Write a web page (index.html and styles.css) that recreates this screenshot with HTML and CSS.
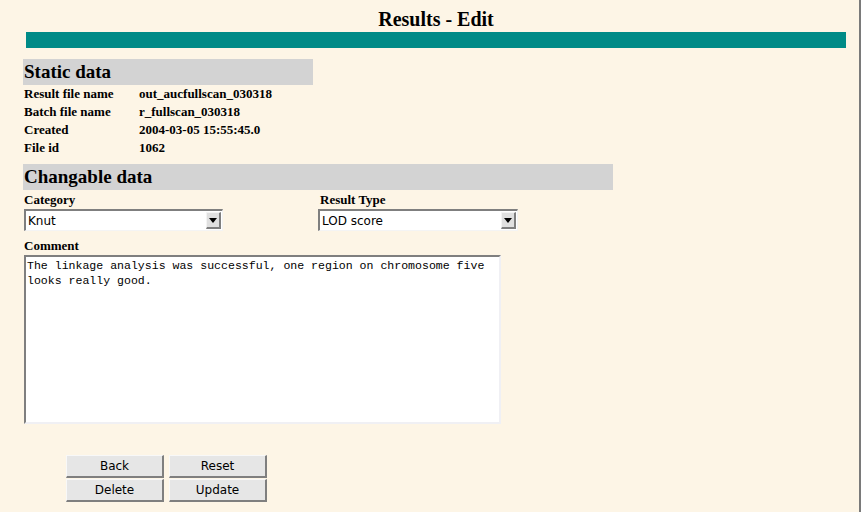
FILE: index.html
```html
<!DOCTYPE html>
<html>
<head>
<meta charset="utf-8">
<title>Results - Edit</title>
<link rel="stylesheet" href="styles.css">
</head>
<body>
<div class="page">
  <div class="top">
    <h1 class="title">Results - Edit</h1>
    <div class="bar"></div>
  </div>

  <section class="static">
    <h2 class="head">Static data</h2>
    <div class="row"><span class="lbl">Result file name</span><span class="val">out_aucfullscan_030318</span></div>
    <div class="row"><span class="lbl">Batch file name</span><span class="val">r_fullscan_030318</span></div>
    <div class="row"><span class="lbl">Created</span><span class="val">2004-03-05 15:55:45.0</span></div>
    <div class="row"><span class="lbl">File id</span><span class="val">1062</span></div>
  </section>

  <section class="change">
    <h2 class="head">Changable data</h2>
    <div class="fields">
      <div class="field">
        <div class="flabel">Category</div>
        <div class="select"><span class="stext">Knut</span><span class="arrow"><svg width="8" height="5" viewBox="0 0 8 5"><polygon points="0,0 8,0 4,5" fill="#000"/></svg></span></div>
      </div>
      <div class="field second">
        <div class="flabel">Result Type</div>
        <div class="select"><span class="stext">LOD score</span><span class="arrow"><svg width="8" height="5" viewBox="0 0 8 5"><polygon points="0,0 8,0 4,5" fill="#000"/></svg></span></div>
      </div>
    </div>
    <div class="flabel">Comment</div>
    <textarea class="comment">The linkage analysis was successful, one region on chromosome five looks really good.</textarea>
  </section>

  <div class="buttons">
    <button class="btn">Back</button>
    <button class="btn">Reset</button>
    <button class="btn">Delete</button>
    <button class="btn">Update</button>
  </div>
</div>
</body>
</html>
```
FILE: styles.css
```css
html, body {
  margin: 0;
  padding: 0;
  background: #fdf5e6;
}
.page {
  box-sizing: border-box;
  width: 861px;
  height: 512px;
  border-right: 2px solid #7a7a7a;
  padding: 0 0 0 23px;
  font-family: "Liberation Serif", "Times New Roman", serif;
  color: #000;
}
.top {
  margin-left: 3px;
  width: 820px;
  padding-top: 6px;
}
.title {
  margin: 0;
  height: 26px;
  font-size: 20px;
  line-height: 26px;
  font-weight: bold;
  text-align: center;
}
.bar {
  height: 16px;
  background: #008b87;
}
.static {
  margin-top: 11px;
  width: 290px;
}
.head {
  margin: 0;
  background: #d3d3d3;
  font-size: 19px;
  font-weight: bold;
  height: 26px;
  line-height: 26px;
  padding-left: 1px;
}
.row {
  display: flex;
  height: 18px;
  line-height: 18px;
  font-size: 13px;
  font-weight: bold;
  padding-left: 1px;
}
.lbl { width: 115px; }
.change {
  margin-top: 7px;
  width: 590px;
}
.fields {
  display: flex;
}
.field { width: 297px; }
.flabel {
  font-size: 13px;
  font-weight: bold;
  height: 19px;
  line-height: 18px;
  padding-left: 1px;
  padding-top: 1px;
  box-sizing: border-box;
}
.select {
  box-sizing: border-box;
  margin-left: 1px;
  width: 199px;
  height: 22px;
  display: flex;
  align-items: center;
  justify-content: space-between;
  background: #fff;
  border-top: 2px solid #7f7f7f;
  border-left: 2px solid #7f7f7f;
  border-bottom: 1px solid #f4f4f4;
  border-right: 1px solid #f4f4f4;
  margin-bottom: 5px;
}
.second .select { margin-left: 0; width: 200px; }
.second .flabel { padding-left: 2px; }
.stext {
  font-family: "DejaVu Sans", sans-serif;
  font-size: 12px;
  padding-left: 2px;
}
.arrow {
  box-sizing: border-box;
  width: 15px;
  height: 17px;
  margin-right: 1px;
  background: #e0e0e0;
  border-top: 1px solid #f4f4f4;
  border-left: 1px solid #f4f4f4;
  border-right: 2px solid #7f7f7f;
  border-bottom: 2px solid #7f7f7f;
  display: flex;
  align-items: center;
  justify-content: center;
}
.comment {
  display: block;
  box-sizing: border-box;
  margin: 0 0 0 1px;
  width: 477px;
  height: 169px;
  resize: none;
  background: #fff;
  border-top: 2px solid #7f7f7f;
  border-left: 2px solid #7f7f7f;
  border-bottom: 2px solid #f0f0f4;
  border-right: 2px solid #f0f0f4;
  padding: 1px 1px;
  font-family: "Liberation Mono", "Courier New", monospace;
  font-size: 11.55px;
  line-height: 15px;
  color: #000;
  outline: none;
}
.buttons {
  margin: 31px 0 0 43px;
  display: grid;
  grid-template-columns: 98px 98px;
  column-gap: 5px;
  row-gap: 1px;
}
.btn {
  box-sizing: border-box;
  height: 23px;
  margin: 0;
  padding: 0;
  background: #e6e6e6;
  border-top: 1px solid #f8f8f8;
  border-left: 1px solid #f8f8f8;
  border-right: 2px solid #7f7f7f;
  border-bottom: 2px solid #7f7f7f;
  font-family: "DejaVu Sans", sans-serif;
  font-size: 12px;
  color: #000;
}
```
